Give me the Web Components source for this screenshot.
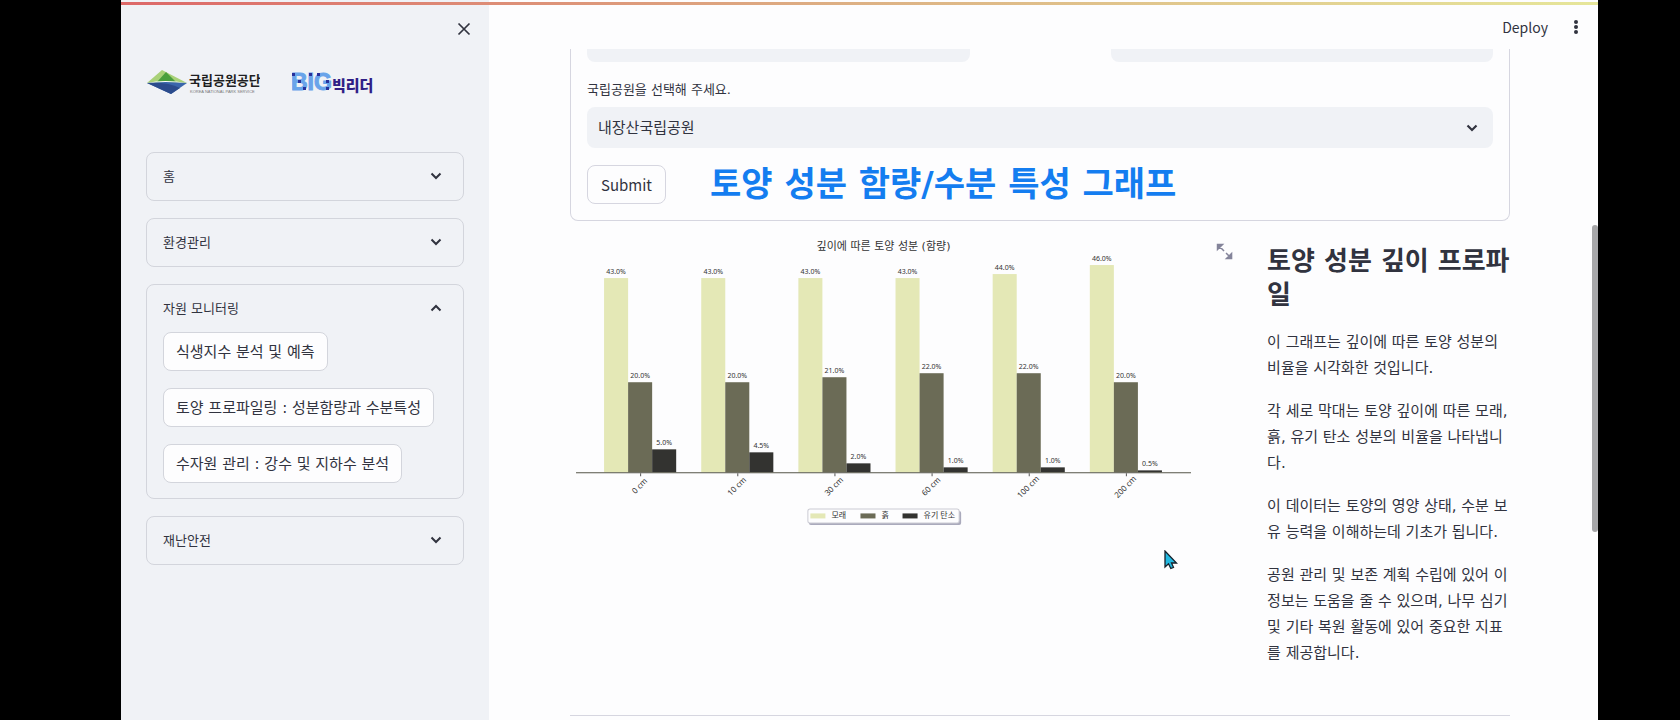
<!DOCTYPE html>
<html lang="ko">
<head>
<meta charset="utf-8">
<title>토양 프로파일링</title>
<style>
body{margin:0;background:#000;color:#31333f;font-family:"DejaVu Sans","Noto Sans CJK KR",sans-serif;font-size:15px}
</style>
</head>
<body>
<app-shell>
  <side-bar slot="side">
    <nav-group label="홈"></nav-group>
    <nav-group label="환경관리"></nav-group>
    <nav-group label="자원 모니터링" open>
      <nav-button>식생지수 분석 및 예측</nav-button>
      <nav-button>토양 프로파일링 : 성분함량과 수분특성</nav-button>
      <nav-button>수자원 관리 : 강수 및 지하수 분석</nav-button>
    </nav-group>
    <nav-group label="재난안전"></nav-group>
  </side-bar>
  <top-bar></top-bar>
  <park-form></park-form>
  <soil-report>
    <soil-chart slot="chart"></soil-chart>
    <span slot="title">토양 성분 깊이 프로파일</span>
    <report-text>이 그래프는 깊이에 따른 토양 성분의 비율을 시각화한 것입니다.</report-text>
    <report-text>각 세로 막대는 토양 깊이에 따른 모래, 흙, 유기 탄소 성분의 비율을 나타냅니다.</report-text>
    <report-text>이 데이터는 토양의 영양 상태, 수분 보유 능력을 이해하는데 기초가 됩니다.</report-text>
    <report-text>공원 관리 및 보존 계획 수립에 있어 이 정보는 도움을 줄 수 있으며, 나무 심기 및 기타 복원 활동에 있어 중요한 지표를 제공합니다.</report-text>
  </soil-report>
</app-shell>
<script>
const define = (name, html, init) => {
  const t = document.createElement('template');
  t.innerHTML = html;
  customElements.define(name, class extends HTMLElement {
    constructor() {
      super();
      this.attachShadow({mode: 'open'}).append(t.content.cloneNode(true));
    }
    connectedCallback() { if (init) init(this, this.shadowRoot); }
  });
};

define('app-shell', `
<style>
:host{display:grid;grid-template-columns:minmax(0,368fr) minmax(0,1109fr);position:relative;box-sizing:border-box;height:100vh;overflow:hidden;margin:0 82px 0 121px;background:#fdfdfe}
.line{position:absolute;top:2px;left:0;right:0;height:3px;background:linear-gradient(90deg,#dd6868,#ddb184 50%,#e6e69a)}
.thumb{position:absolute;right:0;top:225px;width:6px;height:307px;border-radius:3px;background:#a6a6a8}
.cursor{position:absolute;left:1043px;top:550px}
main{min-width:0;padding-right:6px}
</style>
<slot name="side"></slot>
<main><slot></slot></main>
<div class="line"></div><div class="thumb"></div>
<svg class="cursor" width="14" height="20" viewBox="0 0 14 20"><path d="M1 1V17L4.500 13.800L6.800 18.500L9.500 17.300L7.500 13H12.500Z" fill="#22b8e0" stroke="#16212b" stroke-width="1.300"/></svg>`);

define('side-bar', `
<style>
:host{display:block;background:#f0f2f6;padding:0 25px}
header{display:flex;justify-content:flex-end;padding-top:21px}
button{border:0;background:none;padding:0;width:16px;height:16px;margin-right:-8px}
svg{display:block}
.logos{display:flex;align-items:center;gap:32px;height:34px;padding:29px 0 52px}
nav{display:grid;gap:17px}
</style>
<header><button aria-label="닫기"><svg width="16" height="16" viewBox="0 0 16 16" fill="none" stroke="#31333f" stroke-width="1.700"><path d="M2.500 2.500L13.500 13.500M13.500 2.500L2.500 13.500"/></svg></button></header>
<div class="logos">
<svg width="114" height="30" viewBox="0 0 114 30">
 <path d="M1 15L16 2L41 15Z" fill="#a9d178"/><path d="M11 14L20 4L30 14Z" fill="#4a9f3d"/>
 <path d="M1 15Q20 13 41 15L25 26Z" fill="#3a66ac"/><path d="M1 15Q22 14 34 20L25 26Z" fill="#2b4b8c"/><path d="M1 15Q18 11 41 15Q18 13 1 15Z" fill="#fff"/>
 <text x="43" y="17" font-family="Noto Sans CJK KR,sans-serif" font-weight="700" font-size="13" fill="#1f1f22">국립공원공단</text>
 <text x="44" y="25" font-family="Liberation Sans,sans-serif" font-size="4" fill="#777">KOREA NATIONAL PARK SERVICE</text>
</svg>
<svg width="86" height="30" viewBox="0 0 86 30">
 <text x="-1" y="22" font-family="Liberation Sans,sans-serif" font-weight="700" font-size="23" fill="#69a4ea" stroke="#69a4ea">BIG</text>
 <g fill="#28309a"><path d="M0 5h3v3H0zM6 12h3v3H6zM11 19h3v3h-3zM17 5h3v3h-3zM25 5h3v3h-3zM34 12h3v3h-3zM34 19h3v3h-3z"/></g>
 <text x="40" y="23" font-family="Noto Sans CJK KR,sans-serif" font-weight="900" font-size="15" fill="#2f1f86">빅리더</text>
</svg>
</div>
<nav><slot></slot></nav>`);

define('nav-group', `
<style>
:host{display:block;border:1px solid #d3d5dc;border-radius:8px}
summary{display:flex;justify-content:space-between;align-items:center;list-style:none;height:45px;padding:0 20px 2px 16px;font-size:13px}
summary svg{display:block}
details[open] summary svg{transform:rotate(180deg)}
.body{display:grid;justify-items:start;gap:17px;padding:0 16px 15px}
</style>
<details><summary><span></span><svg width="14" height="14" viewBox="0 0 14 14" fill="none" stroke="#31333f" stroke-width="2"><path d="M2.500 4.500L7 9L11.500 4.500"/></svg></summary><div class="body"><slot></slot></div></details>`,
(el, r) => { r.querySelector('span').textContent = el.getAttribute('label'); r.querySelector('details').open = el.hasAttribute('open'); });

define('nav-button', `
<style>
:host{display:block}
button{display:block;height:39px;padding:0 12px 2px;border:1px solid #d3d5dc;border-radius:8px;background:#fdfdfe;color:inherit;font:inherit;white-space:nowrap}
</style><button><slot></slot></button>`);

define('top-bar', `
<style>
:host{display:flex;justify-content:flex-end;align-items:center;gap:24px;height:49px;padding:5px 12px 0 0;box-sizing:border-box}
button{border:0;background:none;padding:0;color:inherit;font:14px/20px "Noto Sans CJK KR",sans-serif}
svg{display:block}
</style>
<button>Deploy</button>
<button aria-label="메뉴"><svg width="8" height="16" viewBox="0 0 8 16" fill="#31333f"><circle cx="4" cy="3" r="2"/><circle cx="4" cy="8" r="2"/><circle cx="4" cy="13" r="2"/></svg></button>`);

define('park-form', `
<style>
:host{display:block;padding:0 82px 0 81px}
form{border:1px solid #d6d6e0;border-top:0;border-radius:0 0 8px 8px;padding:0 16px 16px}
.fields{display:grid;grid-template-columns:1fr 1fr;gap:141px}
.fields i{height:13px;background:#f0f2f6;border-radius:0 0 8px 8px}
label{display:block;font-size:13px;line-height:20px;margin:18px 0 7px}
.pick{display:grid;align-items:center}
.pick>*{grid-area:1/1}
select{appearance:none;width:100%;height:41px;border:0;border-radius:8px;background:#f0f2f6;padding:0 11px;color:inherit;font:inherit}
.pick svg{justify-self:end;margin-right:14px}
.row{display:flex;align-items:center;gap:44px;margin-top:16px;height:40px}
button{width:79px;height:39px;border:1px solid #d6d6e0;border-radius:8px;background:#fdfdfe;color:inherit;padding:0;font:15px "Noto Sans CJK KR",sans-serif}
h2{margin:0;font:700 34px/40px "DejaVu Sans","Noto Sans CJK KR",sans-serif;color:#147df0;white-space:nowrap}
</style>
<form>
<div class="fields"><i></i><i></i></div>
<label for="park">국립공원을 선택해 주세요.</label>
<div class="pick"><select id="park"><option>내장산국립공원</option></select>
<svg width="14" height="14" viewBox="0 0 14 14" fill="none" stroke="#31333f" stroke-width="2.200"><path d="M2.500 4.500L7 9L11.500 4.500"/></svg></div>
<div class="row"><button type="button">Submit</button><h2>토양 성분 함량/수분 특성 그래프</h2></div>
</form>`);

define('soil-report', `
<style>
:host{display:block;padding:16px 82px 0 81px}
.cols{display:grid;grid-template-columns:minmax(0,14fr) minmax(0,5fr);gap:17px;border-bottom:1px solid #d6d6e0;padding-bottom:49px}
h3{margin:0 -4px 17px 0;padding-top:7px;font:700 26px/34px "DejaVu Sans","Noto Sans CJK KR",sans-serif}
.text{display:grid;gap:17px}
</style>
<div class="cols"><slot name="chart"></slot><section><h3><slot name="title"></slot></h3><div class="text"><slot></slot></div></section></div>`);

define('report-text', `
<style>:host{display:block}p{margin:0;line-height:26px}</style><p><slot></slot></p>`);

define('soil-chart', `
<style>
:host{display:block}
svg{display:block;width:100%;height:auto}
text{font-family:"Noto Sans","Noto Sans CJK KR",sans-serif;fill:#333}
.title{font-family:"DejaVu Sans","Noto Sans CJK KR",sans-serif}
</style>
<svg viewBox="0 0 679 300" role="img" aria-label="깊이에 따른 토양 성분">
<text class="title" x="313" y="13" font-size="11" text-anchor="middle">깊이에 따른 토양 성분 (함량)</text>
<g id="plot"></g>
<path d="M6 235.500H620" stroke="#555548"/>
<rect x="238.500" y="273.500" width="152" height="14" rx="2" fill="#aaaabc"/>
<rect x="237.500" y="271.500" width="151" height="14" rx="2" fill="#fdfdfe" stroke="#ccccd4"/>
<g font-size="8">
<rect x="240" y="276" width="15" height="5" fill="#e4e8b6"/><text x="261" y="281">모래</text>
<rect x="290" y="276" width="15" height="5" fill="#6b6b56"/><text x="311" y="281">흙</text>
<rect x="332" y="276" width="15" height="5" fill="#333330"/><text x="353" y="281">유기 탄소</text>
</g>
<g fill="#84849a" stroke="#84849a" stroke-width="1.500"><path d="M646.500 7.500h5l-5 5zM648 9l5 5M660.500 21.500h-5l5-5zM659 20l-4-4"/></g>
</svg>`,
(el, r) => {
  const rows = [['0 cm',43,20,5],['10 cm',43,20,4.5],['30 cm',43,21,2],['60 cm',43,22,1],['100 cm',44,22,1],['200 cm',46,20,0.5]];
  const fills = ['#e4e8b6','#6b6b56','#333330'];
  r.getElementById('plot').innerHTML = rows.map(([name, ...vals], i) => {
    const c = 70 + 97 * i;
    const bars = vals.map((v, k) => {
      const x = c - 36 + 24 * k, h = Math.round(v * 4.5), y = 235 - h;
      return `<rect x="${x}" y="${y}" width="24" height="${h}" fill="${fills[k]}"/><text x="${x + 12}" y="${y - 4}" font-size="7" text-anchor="middle">${v.toFixed(1)}%</text>`;
    }).join('');
    const y = 247 + name.length / 2;
    return bars + `<path d="M${c}.500 236v3" stroke="#555"/><text transform="translate(${c} ${y}) rotate(-45)" y="2" font-size="8" text-anchor="middle">${name}</text>`;
  }).join('');
});
</script>
</body>
</html>
